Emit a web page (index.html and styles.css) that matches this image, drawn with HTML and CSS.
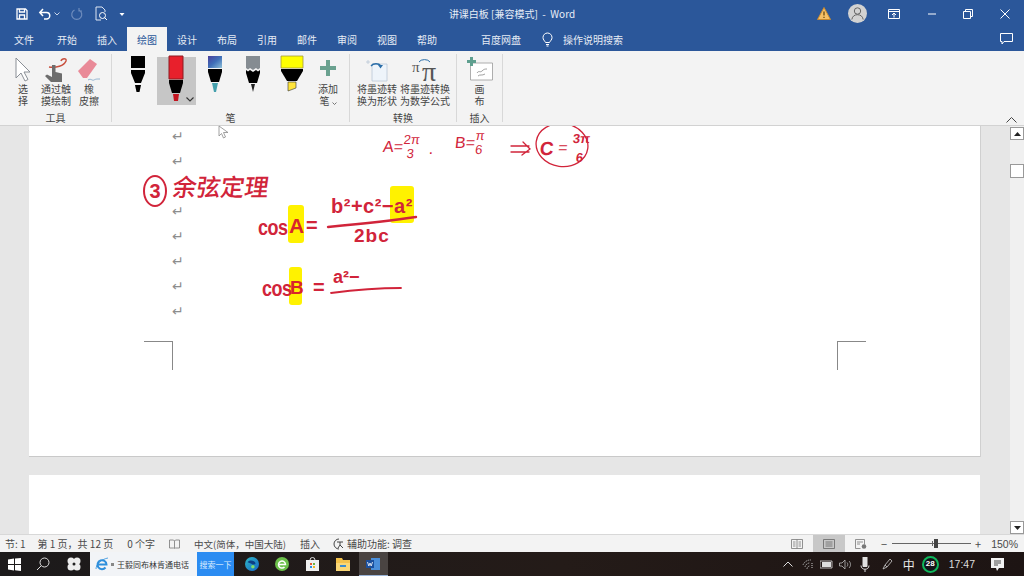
FILE: index.html
```html
<!DOCTYPE html>
<html lang="zh-CN">
<head>
    <meta charset="UTF-8">
    <title>讲课白板 [兼容模式] - Word</title>
    <link rel="stylesheet" href="styles.css">
</head>
<body>
<div class="window">
    <header class="titlebar">
        <div class="quick">
            <svg class="q-save" width="14" height="14" viewBox="0 0 14 14"><path d="M2 2h8.500L12 3.500V12H2zM4.500 2v3h5V2M4.500 12V8h5v4" fill="none" stroke="#fff" stroke-width="1.300"/></svg>
            <svg class="q-undo" width="14" height="14" viewBox="0 0 14 14"><path d="M2 5.500h6.500a3 3 0 0 1 0 6.500H6M5 2L1.800 5.500 5 9" fill="none" stroke="#fff" stroke-width="1.500"/></svg>
            <svg class="q-drop" width="6" height="4" viewBox="0 0 6 4"><path d="M.5.500L3 3 5.500.5" fill="none" stroke="#c9d6ea"/></svg>
            <svg class="q-redo" width="14" height="14" viewBox="0 0 14 14"><path d="M9 3a5 5 0 1 1-4.500 0M9 1v3h3" fill="none" stroke="#6d8bbc" stroke-width="1.200"/></svg>
            <svg class="q-preview" width="14" height="16" viewBox="0 0 14 16"><path d="M2 1h6l3 3v2M2 1v13h5" fill="none" stroke="#dfe7f3"/><circle cx="8.500" cy="9.500" r="3" fill="none" stroke="#fff"/><path d="M10.500 11.500l2.500 2.500" stroke="#fff"/></svg>
            <svg class="q-more" width="6" height="6" viewBox="0 0 6 6"><path d="M.5 2h5L3 5z" fill="#fff"/></svg>
        </div>
        <div class="doc-title">讲课白板 [兼容模式] &nbsp;-&nbsp; Word</div>
        <div class="win-controls">
            <svg class="w-warn" width="14" height="13" viewBox="0 0 14 13"><path d="M7 .5L13.500 12.500H.5z" fill="#f7c067" stroke="#c98a2e"/><path d="M7 4.500v4M7 9.700v1.300" stroke="#6b4a10" stroke-width="1.300"/></svg>
            <svg class="w-user" width="19" height="19" viewBox="0 0 19 19"><circle cx="9.500" cy="9.500" r="9.500" fill="#d2d2d2"/><circle cx="9.500" cy="7" r="3.200" fill="none" stroke="#666"/><path d="M3.800 15.500c.6-3.500 3-4.800 5.700-4.800s5.100 1.300 5.700 4.800" fill="none" stroke="#666"/></svg>
            <svg class="w-display" width="12" height="10" viewBox="0 0 12 10"><path d="M.5.500h11v9H.5zM.5 2.500h11M6 8.500V4M4 6l2-2 2 2" fill="none" stroke="#fff"/></svg>
            <svg class="w-min" width="10" height="2" viewBox="0 0 10 2"><path d="M1 1h8" stroke="#fff"/></svg>
            <svg class="w-max" width="10" height="10" viewBox="0 0 10 10"><path d="M.5 2.500h7v7h-7zM2.500 2.500v-2h7v7h-2" fill="none" stroke="#fff"/></svg>
            <svg class="w-close" width="10" height="10" viewBox="0 0 10 10"><path d="M.5.500l9 9M9.500.500l-9 9" stroke="#fff"/></svg>
        </div>
    </header>

    <nav class="tabs">
        <span class="tab">文件</span>
        <span class="tab tab-start">开始</span>
        <span class="tab">插入</span>
        <span class="tab tab-active">绘图</span>
        <span class="tab">设计</span>
        <span class="tab">布局</span>
        <span class="tab">引用</span>
        <span class="tab">邮件</span>
        <span class="tab">审阅</span>
        <span class="tab">视图</span>
        <span class="tab">帮助</span>
        <span class="tab tab-pan">百度网盘</span>
        <svg class="bulb" width="11" height="15" viewBox="0 0 11 15"><path d="M3.500 10.500C2.500 8.500 1 7.800 1 5.500a4.500 4.500 0 0 1 9 0c0 2.300-1.500 3-2.500 5zM4 12.500h3M4.500 14h2" fill="none" stroke="#fff"/></svg>
        <span class="tell">操作说明搜索</span>
        <svg class="comment" width="13" height="12" viewBox="0 0 13 12"><path d="M.5.500h12v8H4L2 11V8.500H.5z" fill="none" stroke="#fff"/></svg>
    </nav>

    <section class="ribbon">
        <div class="group group-tools">
            <div class="group-body">
                <div class="tool">
                    <svg width="16" height="26" viewBox="0 0 16 26"><path d="M1 1v20l5-5 4 8 3-1.500-4-7.500h6z" fill="#fff" stroke="#8a8f96"/></svg>
                    <span>选<br>择</span>
                </div>
                <div class="tool">
                    <svg width="24" height="26" viewBox="0 0 24 26"><path d="M5 10c7 1 15-1 17-6 1-3-4-3-5 0" fill="none" stroke="#c8503e" stroke-width="1.500"/><path d="M8 8h3.500v7l6.500 1.500V25H7l-6-6 2-1.500L8 20z" fill="#6d6d6d"/></svg>
                    <span>通过触<br>摸绘制</span>
                </div>
                <div class="tool">
                    <svg width="24" height="26" viewBox="0 0 24 26"><path d="M1 14L13 2l7 5-10 14H6z" fill="#e98a98"/><path d="M11 23c3-2 4 1 6 0s2-1 6-1" fill="none" stroke="#7aa3c8" stroke-width=".8"/></svg>
                    <span>橡<br>皮擦</span>
                </div>
            </div>
            <div class="group-label">工具</div>
        </div>

        <div class="group group-pens">
            <div class="group-body">
                <div class="pen">
                    <svg width="18" height="38" viewBox="0 0 18 38"><path d="M2 1h14v12H2z" fill="#000"/><path d="M2 15h14v3l-4 10H6L2 18z" fill="#000"/><path d="M6 30h6l-1.500 7h-3z" fill="#000"/></svg>
                </div>
                <div class="pen pen-active">
                    <svg width="18" height="46" viewBox="0 0 18 46"><path d="M2 1h14v23H2z" fill="#e8202c" stroke="#8d1b20"/><path d="M2 25h14v3l-3 10H5L2 28z" fill="#000"/><path d="M6 39h6l-1 7H7z" fill="#c3141f"/></svg>
                    <svg class="pen-caret" width="8" height="5" viewBox="0 0 8 5"><path d="M.5.500L4 4 7.500.5" fill="none" stroke="#333" stroke-width="1.100"/></svg>
                </div>
                <div class="pen">
                    <svg width="16" height="38" viewBox="0 0 16 38"><defs><linearGradient id="galaxy" x1="0" y1="0" x2="1" y2="1"><stop offset="0" stop-color="#4a3f9c"/><stop offset=".5" stop-color="#3f6fb8"/><stop offset="1" stop-color="#8fc0d8"/></linearGradient></defs><path d="M1 1h14v12H1z" fill="url(#galaxy)"/><path d="M1 14h14v3l-3 10H4L1 17z" fill="#000"/><path d="M5 28h6l-2 9H7z" fill="#45a0ad"/></svg>
                </div>
                <div class="pen">
                    <svg width="16" height="38" viewBox="0 0 16 38"><path d="M1 1h14v12l-2 1.500-2-1.500-3 2-3-2-2 1.500-2-1.500z" fill="#858c92"/><path d="M1 15l2 1.500 2-1.500 3 2 3-2 2 1.500 2-1.500v3l-3 10H4L1 18z" fill="#000"/><path d="M6 29h4l-2 8z" fill="#222"/></svg>
                </div>
                <div class="pen">
                    <svg width="24" height="38" viewBox="0 0 24 38"><path d="M1 1h22v12H1z" fill="#ffff00" stroke="#a39a3a" stroke-width=".8"/><path d="M1 14h22v2l-6 10H7L1 16z" fill="#000"/><path d="M8 27h8v6l-8 3z" fill="#ffe43b" stroke="#333" stroke-width=".6"/></svg>
                </div>
                <div class="tool tool-add">
                    <svg width="16" height="16" viewBox="0 0 16 16"><path d="M6 0h4v6h6v4h-6v6H6v-6H0V6h6z" fill="#6aa18f"/></svg>
                    <span>添加<br>笔 <svg width="5" height="3" viewBox="0 0 5 3"><path d="M.5.500L2.500 2.500 4.500.5" fill="none" stroke="#555" stroke-width=".8"/></svg></span>
                </div>
            </div>
            <div class="group-label">笔</div>
        </div>

        <div class="group group-convert">
            <div class="group-body">
                <div class="tool tool-wide">
                    <svg width="24" height="26" viewBox="0 0 24 26"><path d="M3 3v4M1 5h4M7 7h15v17H7z" fill="#eef4fa" stroke="#b9c7d6" stroke-width=".8"/><path d="M6 9a6 5 0 0 1 10 0" fill="none" stroke="#2b6ea8" stroke-width="1.300"/><path d="M13 8h5l-2.500 3.500z" fill="#2b6ea8"/></svg>
                    <span>将墨迹转<br>换为形状</span>
                </div>
                <div class="tool tool-wide">
                    <svg class="math-icon" width="26" height="26" viewBox="0 0 26 26"><path d="M7 5a6 4 0 0 1 11 0" fill="none" stroke="#2b6ea8"/><text x="0" y="15" class="pi-small">π</text><text x="10" y="24" class="pi-big">π</text></svg>
                    <span>将墨迹转换<br>为数学公式</span>
                </div>
            </div>
            <div class="group-label">转换</div>
        </div>

        <div class="group group-insert">
            <div class="group-body">
                <div class="tool">
                    <svg width="26" height="26" viewBox="0 0 26 26"><path d="M3.500 6h22v17h-22z" fill="#fff" stroke="#9a9a9a" stroke-width=".8"/><path d="M3 0h3v3h3v3H6v3H3V6H0V3h3z" fill="#5f9f8f"/><path d="M10 16c2-3 3 0 5-2s3-2 5-2M11 19c2-2 4 0 7-2" fill="none" stroke="#777" stroke-width=".7"/></svg>
                    <span>画<br>布</span>
                </div>
            </div>
            <div class="group-label">插入</div>
        </div>
        <svg class="collapse" width="11" height="6" viewBox="0 0 11 6"><path d="M.5 5.500l5-5 5 5" fill="none" stroke="#444"/></svg>
    </section>

    <main class="workspace">
        <div class="pages">
            <div class="page page-one">
                <div class="para-marks">
                    <span>↵</span><span>↵</span><span></span><span>↵</span><span>↵</span><span>↵</span><span>↵</span><span>↵</span>
                </div>
                <div class="crop crop-left"></div>
                <div class="crop crop-right"></div>

                <div class="hl hl-a"></div>
                <div class="hl hl-a2"></div>
                <div class="hl hl-b"></div>

                <svg class="ink-lines" width="951" height="330" viewBox="0 0 951 330">
                    <ellipse cx="533" cy="19" rx="26" ry="21.500" transform="rotate(8 533 19)"/>
                    <path d="M299 101C330 98 360 95 387 91" stroke-width="2.400"/>
                    <path d="M302 167C325 164 350 162 372 162" stroke-width="1.800"/>
                    <path d="M482 20h18M482 26h18M494 16l7 7-8 6" stroke-width="1.300"/>
                </svg>

                <span class="ink ink-circled">3</span>
                <span class="ink ink-title">余弦定理</span>
                <span class="ink ink-cos ink-cos-a">cos</span>
                <span class="ink ink-a">A</span>
                <span class="ink ink-eq-a">=</span>
                <span class="ink ink-num">b²+c²−a²</span>
                <span class="ink ink-den">2bc</span>
                <span class="ink ink-cos ink-cos-b">cos</span>
                <span class="ink ink-b">B</span>
                <span class="ink ink-eq-b">=</span>
                <span class="ink ink-num-b">a²−</span>

                <span class="ink ink-small ink-top-a">A=<span class="frac"><span>2π</span><span>3</span></span></span>
                <span class="ink ink-small ink-comma">.</span>
                <span class="ink ink-small ink-top-b">B=<span class="frac"><span>π</span><span>6</span></span></span>
                <span class="ink ink-small ink-top-c"><span class="ink-c">C</span> = <span class="frac frac-big"><span>3π</span><span>6</span></span></span>
            </div>
            <div class="page page-two"></div>
        </div>
        <svg class="cursor" width="11" height="14" viewBox="0 0 11 14"><path d="M1 1v10l2.500-2.500L5.500 13l2-1-2-4.500H10z" fill="#fff" stroke="#8a8a8a" stroke-width=".8"/></svg>
        <aside class="scrollbar">
            <div class="sb-btn"><svg width="7" height="4" viewBox="0 0 7 4"><path d="M0 4L3.500 0 7 4z" fill="#222"/></svg></div>
            <div class="sb-thumb"></div>
            <div class="sb-btn sb-down"><svg width="7" height="4" viewBox="0 0 7 4"><path d="M0 0l3.500 4L7 0z" fill="#222"/></svg></div>
        </aside>
    </main>

    <footer class="statusbar">
        <span class="st-sec">节: 1</span>
        <span class="st-page">第 1 页，共 12 页</span>
        <span class="st-words">0 个字</span>
        <svg class="st-book" width="11" height="10" viewBox="0 0 11 10"><path d="M.5 1h4l1 1 1-1h4v8h-4l-1 .5-1-.5h-4zM5.500 2v7" fill="none" stroke="#777" stroke-width=".8"/></svg>
        <span class="st-lang">中文(简体，中国大陆)</span>
        <span class="st-ins">插入</span>
        <svg class="st-acc" width="12" height="12" viewBox="0 0 12 12"><path d="M6 1a5 5 0 1 0 0 10M4 4h6M7 4v3l3 3M7 7l-2 3" fill="none" stroke="#444"/></svg>
        <span class="st-access">辅助功能: 调查</span>
        <div class="st-right">
            <span class="view"><svg width="12" height="10" viewBox="0 0 12 10"><path d="M.5.500h11v9H.5zM6 .5v9M2 3h2.500M2 5h2.500M2 7h2.500M7.500 3H10M7.500 5H10M7.500 7H10" fill="none" stroke="#777" stroke-width=".8"/></svg></span>
            <span class="view view-active"><svg width="12" height="10" viewBox="0 0 12 10"><path d="M.5.500h11v9H.5zM2.500 3h7M2.500 5h7M2.500 7h7" fill="none" stroke="#666" stroke-width=".8"/></svg></span>
            <span class="view"><svg width="12" height="10" viewBox="0 0 12 10"><path d="M.5.500h9v5M.5.500v9h5M2 3h6M2 5h3" fill="none" stroke="#777" stroke-width=".8"/><circle cx="9" cy="7.500" r="2.300" fill="#777"/></svg></span>
            <span class="zoom-minus">−</span>
            <div class="slider"><i class="tick"></i><i class="thumb"></i></div>
            <span class="zoom-plus">+</span>
            <span class="zoom-val">150%</span>
        </div>
    </footer>

    <footer class="taskbar">
        <svg class="tb-start" width="13" height="13" viewBox="0 0 13 13"><path d="M0 1.500l6-.9V6H0zM7 .5l6-.5v6H7zM0 7h6v5.400l-6-.9zM7 7h6v6l-6-.8z" fill="#fff"/></svg>
        <svg class="tb-search" width="14" height="14" viewBox="0 0 14 14"><circle cx="8.500" cy="5.500" r="4.500" fill="none" stroke="#ddd"/><path d="M5.300 8.700L1 13" stroke="#ddd"/></svg>
        <svg class="tb-wheel" width="14" height="14" viewBox="0 0 14 14"><circle cx="4" cy="4" r="3.500" fill="#eee"/><circle cx="10" cy="4" r="3.500" fill="#eee"/><circle cx="4" cy="10" r="3.500" fill="#eee"/><circle cx="10" cy="10" r="3.500" fill="#eee"/><circle cx="7" cy="7" r="1.500" fill="#222"/></svg>
        <div class="tb-browser">
            <svg width="14" height="14" viewBox="0 0 14 14"><path d="M2.500 7.500h9a4.500 4.500 0 1 0-1 3" fill="none" stroke="#2f8fdc" stroke-width="2"/><path d="M1 12c0-5 6-10 12-11" fill="none" stroke="#2f8fdc" stroke-width=".8"/></svg>
            <i class="tb-dot"></i>
            <span class="tb-query">王毅同布林肯通电话</span>
            <span class="tb-go">搜索一下</span>
        </div>
        <svg class="tb-edge" width="14" height="14" viewBox="0 0 16 16"><defs><linearGradient id="edge" x1="0" y1="0" x2="1" y2="1"><stop offset="0" stop-color="#2fb7c4"/><stop offset="1" stop-color="#1668c8"/></linearGradient></defs><circle cx="8" cy="8" r="8" fill="url(#edge)"/><path d="M3 6c1-3 8-3 9 1 0 2-4 2-4 1" fill="#0c3f86"/><circle cx="9" cy="11" r="2" fill="#7fdc6a"/></svg>
        <svg class="tb-360" width="14" height="14" viewBox="0 0 14 14"><circle cx="7" cy="7" r="7" fill="#6cc04a"/><path d="M3.500 7.500h7a3.500 3.500 0 1 0-1 2.500" fill="none" stroke="#fff" stroke-width="1.500"/></svg>
        <svg class="tb-store" width="13" height="14" viewBox="0 0 13 14"><path d="M0 3h13v11H0z" fill="#f0f0f0"/><path d="M4 3a2.500 2.500 0 0 1 5 0" fill="none" stroke="#ddd"/><path d="M4 6h2v2H4z" fill="#e8572c"/><path d="M7 6h2v2H7z" fill="#6cb33f"/><path d="M4 9h2v2H4z" fill="#2c8fe0"/><path d="M7 9h2v2H7z" fill="#f2b61e"/></svg>
        <svg class="tb-folder" width="14" height="13" viewBox="0 0 14 13"><path d="M0 0h6l1 2h7v11H0z" fill="#f4c24b"/><path d="M0 5h14v8H0z" fill="#fad775"/><path d="M4 7h6v2H4z" fill="#3b8dd0"/></svg>
        <div class="tb-word">
            <svg width="15" height="14" viewBox="0 0 15 14"><path d="M5 1h9v12H5z" fill="#4b8fdb"/><path d="M0 3h8v8H0z" fill="#1a4f9e"/><path d="M1.500 5L2.800 9 4 6l1.200 3L6.500 5" fill="none" stroke="#fff" stroke-width=".8"/></svg>
        </div>
        <div class="tray">
            <svg class="tr-up" width="10" height="6" viewBox="0 0 10 6"><path d="M.5 5.500L5 1l4.500 4.500" fill="none" stroke="#ddd"/></svg>
            <svg class="tr-wifi" width="12" height="11" viewBox="0 0 12 11"><path d="M1 6a8 8 0 0 1 8-5M3 8a5 5 0 0 1 5-4M5 10a3 3 0 0 1 3-3" fill="none" stroke="#aaa" stroke-dasharray="1.500 .7"/><path d="M10 4v6" stroke="#ccc" stroke-dasharray="1 1"/></svg>
            <svg class="tr-batt" width="13" height="9" viewBox="0 0 13 9"><path d="M0 1h12v7H0z" fill="none" stroke="#ddd" stroke-width=".8"/><path d="M2 2h9v5H2z" fill="#ddd"/></svg>
            <svg class="tr-vol" width="13" height="11" viewBox="0 0 13 11"><path d="M.5 4h2.500L6 1v9L3 7H.5zM8 3.500c1 1 1 3 0 4M10 2c2 2 2 5 0 7" fill="none" stroke="#bbb" stroke-width=".8"/></svg>
            <svg class="tr-mic" width="10" height="15" viewBox="0 0 10 15"><path d="M3 0h4v9.500H3z" fill="#e0e0e0" stroke="#e0e0e0" stroke-linejoin="round"/><path d="M1 8.500c0 5 8 5 8 0M5 12.500V15" fill="none" stroke="#ddd"/></svg>
            <svg class="tr-pen" width="11" height="12" viewBox="0 0 11 12"><path d="M1 11l2-4 5-6 2 2-5 6zM3 7l2 2" fill="none" stroke="#ccc" stroke-width=".8"/></svg>
            <span class="tr-ime">中</span>
            <span class="tr-badge">28</span>
            <span class="tr-clock">17:47</span>
            <svg class="tr-note" width="13" height="13" viewBox="0 0 13 13"><path d="M0 0h13v10H8l-2 3-1-3H0z" fill="#f2f2f2"/><path d="M3 3h7M3 5h7M3 7h4" stroke="#222" stroke-width=".8"/></svg>
        </div>
    </footer>
</div>
</body>
</html>
```

FILE: styles.css
```css
* {
    box-sizing: border-box;
}

html, body {
    margin: 0;
    height: 100%;
    overflow: hidden;
}

body {
    font-family: "Noto Sans CJK SC", "Noto Sans", sans-serif;
    font-size: 10px;
    color: #444;
}

.window {
    display: flex;
    flex-direction: column;
    width: 1024px;
    height: 576px;
}

/* title bar */
.titlebar {
    display: grid;
    grid-template-columns: 1fr auto 1fr;
    align-items: center;
    height: 27px;
    background-color: #2b579a;
    color: #e8eef7;
}

.doc-title {
    font-size: 10px;
}

.quick {
    display: flex;
    align-items: center;
    padding-left: 15px;
}

.q-undo { margin-left: 9px; }
.q-drop { margin-left: 2px; }
.q-redo { margin-left: 10px; }
.q-preview { margin-left: 10px; }
.q-more { margin-left: 11px; }

.win-controls {
    display: flex;
    align-items: center;
    justify-content: flex-end;
    padding-right: 14px;
}

.w-user { margin-left: 17px; }
.w-display { margin-left: 21px; }
.w-min { margin-left: 27px; }
.w-max { margin-left: 26px; }
.w-close { margin-left: 27px; }

/* tabs */
.tabs {
    display: flex;
    align-items: center;
    height: 24px;
    padding-left: 4px;
    background-color: #2b579a;
    color: #e6ecf5;
}

.tab {
    display: flex;
    align-items: center;
    justify-content: center;
    flex: none;
    width: 40px;
    height: 100%;
}

.tab-start { margin-left: 3px; }

.tab-active {
    background-color: #f3f3f3;
    color: #2b579a;
}

.tab-pan { margin-left: 34px; }
.bulb { margin-left: 21px; }
.tell { margin-left: 10px; }
.comment { margin-left: auto; margin-right: 11px; }

/* ribbon */
.ribbon {
    position: relative;
    display: flex;
    height: 75px;
    padding-top: 3px;
    background-color: #f3f3f3;
    border-bottom: 1px solid #d2d2d2;
}

.group {
    display: flex;
    flex-direction: column;
    align-items: center;
    flex: none;
    height: 68px;
    border-right: 1px solid #d8d8d8;
}

.group-tools { width: 112px; }
.group-pens { width: 238px; }
.group-convert { width: 107px; }
.group-insert { width: 46px; }

.group-body {
    display: flex;
    flex: 1;
    width: 100%;
    justify-content: center;
}

.group-tools .group-body { justify-content: flex-start; padding-left: 6.500px; }
.group-pens .group-body { justify-content: flex-start; padding-left: 6.500px; }
.group-convert .group-body { justify-content: flex-start; padding-left: 3px; }

.group-label {
    height: 16px;
    line-height: 11px;
    margin-bottom: -6px;
    color: #444;
}

.tool {
    display: flex;
    flex-direction: column;
    align-items: center;
    line-height: 12px;
    padding-top: 3px;
    text-align: center;
}

.tool > svg {
    height: 26px;
    flex: none;
}

.group-tools .tool { width: 33px; }
.tool-wide { width: 48px; white-space: nowrap; }

.pen {
    position: relative;
    display: flex;
    justify-content: center;
    align-items: flex-start;
    flex: none;
    width: 38.500px;
    height: 48px;
    margin-top: 3px;
}

.pen > svg:first-child {
    margin-top: -2px;
}

.pen-active {
    background-color: #c6c6c6;
}

.pen-caret {
    position: absolute;
    right: 2px;
    bottom: 3px;
}

.tool-add {
    width: 34px;
    padding-top: 6px;
}

.tool-add > svg {
    height: 16px;
    margin-bottom: 7px;
}

.math-icon {
    overflow: visible;
}

.pi-small {
    font-family: "Liberation Serif", serif;
    font-size: 15px;
    fill: #555;
}

.pi-big {
    font-family: "Liberation Serif", serif;
    font-size: 28px;
    fill: #555;
}

.collapse {
    position: absolute;
    right: 7px;
    bottom: 2px;
}

/* document */
.workspace {
    position: relative;
    display: flex;
    flex: 1;
    min-height: 0;
    background-color: #e6e6e6;
}

.pages {
    flex: 1;
    min-width: 0;
    overflow: hidden;
    padding-left: 29px;
}

.page {
    position: relative;
    width: 951px;
    background-color: #fff;
}

.page-one {
    height: 331px;
    border-bottom: 1px solid #c9c9c9;
    box-shadow: 1px 0 0 #d0d0d0;
}

.page-two {
    height: 100px;
    margin-top: 18px;
}

.para-marks {
    display: flex;
    flex-direction: column;
    padding: 0 0 0 143px;
}

.para-marks span {
    height: 25px;
    line-height: 21px;
    font-family: "DejaVu Sans", sans-serif;
    font-size: 14px;
    color: #8d8d8d;
}

.crop {
    position: absolute;
    top: 215px;
    width: 29px;
    height: 29px;
    border-top: 1px solid #888;
}

.crop-left {
    left: 115px;
    border-right: 1px solid #888;
}

.crop-right {
    left: 808px;
    border-left: 1px solid #888;
}

/* ink sits freely on the page */
.hl {
    position: absolute;
    background-color: #fff200;
    border-radius: 3px;
}

.hl-a { left: 259px; top: 79px; width: 16px; height: 38px; }
.hl-a2 { left: 361px; top: 60px; width: 24px; height: 37px; }
.hl-b { left: 260px; top: 141px; width: 13px; height: 38px; }

.ink-lines {
    position: absolute;
    left: 0;
    top: 0;
}

.ink-lines ellipse,
.ink-lines path {
    fill: none;
    stroke: #d1243a;
    stroke-linecap: round;
}

.ink-lines ellipse {
    stroke-width: 1.300;
}

.ink {
    position: absolute;
    color: #d1243a;
    font-family: "Liberation Sans", sans-serif;
    font-weight: bold;
    white-space: nowrap;
    line-height: 1;
}

.ink-circled {
    left: 114px;
    top: 49px;
    width: 24px;
    height: 32px;
    border: 2px solid #d1243a;
    border-radius: 50%;
    text-align: center;
    font-size: 20px;
    line-height: 28px;
}

.ink-title {
    left: 144px;
    top: 48px;
    font-family: "Noto Sans CJK SC", sans-serif;
    font-size: 24px;
    font-weight: 500;
    transform: skewX(-8deg);
}

.ink-cos {
    font-size: 18px;
    letter-spacing: -.5px;
    transform: scaleY(1.250);
}

.ink-cos-a { left: 229px; top: 92px; }
.ink-a { left: 260px; top: 89px; font-size: 21px; color: #d8252c; }
.ink-eq-a { left: 277px; top: 89px; font-size: 20px; }
.ink-num { left: 302px; top: 70px; font-size: 20px; letter-spacing: .5px; }
.ink-den { left: 325px; top: 100px; font-size: 19px; letter-spacing: 1px; }
.ink-cos-b { left: 233px; top: 153px; }
.ink-b { left: 261px; top: 152px; font-size: 19px; color: #d8252c; }
.ink-eq-b { left: 284px; top: 151px; font-size: 20px; }
.ink-num-b { left: 304px; top: 142px; font-size: 18px; }

.ink-small {
    display: flex;
    align-items: center;
    font-size: 16px;
    font-weight: normal;
    transform: skewX(-6deg);
}

.frac {
    display: flex;
    flex-direction: column;
    align-items: center;
    font-size: 13px;
    line-height: 14px;
}

.frac-big {
    font-size: 13px;
    line-height: 19px;
    font-weight: bold;
}

.ink-top-a { left: 354px; top: 7px; }
.ink-comma { left: 400px; top: 15px; }
.ink-top-b { left: 426px; top: 3px; }
.ink-top-c { left: 511px; top: 3px; white-space: pre; }
.ink-c { font-size: 19px; font-weight: bold; }

.cursor {
    position: absolute;
    left: 218px;
    top: -1px;
}

/* scrollbar */
.scrollbar {
    position: relative;
    flex: none;
    width: 14px;
    background-color: #f0f0f0;
}

.sb-btn {
    display: flex;
    align-items: center;
    justify-content: center;
    height: 13px;
    margin-top: 1px;
    background-color: #fff;
    border: 1px solid #999;
}

.sb-down {
    position: absolute;
    left: 0;
    right: 0;
    bottom: 0;
}

.sb-thumb {
    height: 14px;
    margin-top: 24px;
    background-color: #fff;
    border: 1px solid #999;
}

/* status bar */
.statusbar {
    display: flex;
    align-items: center;
    flex: none;
    height: 18px;
    background-color: #f3f3f3;
    border-top: 1px solid #d8d8d8;
    color: #4a4a4a;
    white-space: nowrap;
}

.st-sec { margin-left: 5px; }
.st-page { margin-left: 12px; }
.st-words { margin-left: 14px; }
.st-book { margin-left: 14px; }
.st-lang { margin-left: 14px; font-size: 9.500px; }
.st-ins { margin-left: 14px; }
.st-acc { margin-left: 13px; }
.st-access { margin-left: 2px; }

.st-right {
    display: flex;
    align-items: center;
    height: 100%;
    margin-left: auto;
}

.view {
    display: flex;
    align-items: center;
    justify-content: center;
    width: 32px;
    height: 100%;
}

.view-active {
    background-color: #c8c8c8;
}

.zoom-minus { margin-left: 4px; font-size: 11px; }

.slider {
    position: relative;
    width: 79px;
    height: 1px;
    margin-left: 5px;
    background-color: #666;
}

.tick {
    position: absolute;
    left: 40px;
    top: -2px;
    width: 1px;
    height: 5px;
    background-color: #666;
}

.thumb {
    position: absolute;
    left: 42px;
    top: -4px;
    width: 4px;
    height: 9px;
    background-color: #444;
}

.zoom-plus { margin-left: 4px; font-size: 11px; }
.zoom-val { margin-left: 10px; margin-right: 6px; font-size: 10.500px; font-family: "Liberation Sans", sans-serif; }

/* taskbar */
.taskbar {
    display: flex;
    align-items: center;
    flex: none;
    height: 24px;
    background: linear-gradient(90deg, #1c1a1b 0%, #241b18 55%, #1d1413 100%);
    color: #e8e8e8;
    white-space: nowrap;
}

.tb-start { margin-left: 8px; }
.tb-search { margin-left: 15px; }
.tb-wheel { margin-left: 17px; }

.tb-browser {
    display: flex;
    align-items: center;
    width: 144px;
    height: 100%;
    margin-left: 9px;
    padding-left: 5px;
    background-color: #f2f4f7;
    color: #333;
    font-size: 8px;
}

.tb-dot {
    width: 3px;
    height: 3px;
    margin-left: 2px;
    background-color: #888;
}

.tb-query { margin-left: 3px; }

.tb-go {
    display: flex;
    align-items: center;
    justify-content: center;
    width: 37px;
    height: 100%;
    margin-left: auto;
    background-color: #2b8cf2;
    color: #dcecff;
}

.tb-edge { margin-left: 11px; }
.tb-360 { margin-left: 16px; }
.tb-store { margin-left: 17px; }
.tb-folder { margin-left: 17px; }

.tb-word {
    display: flex;
    align-items: center;
    justify-content: center;
    width: 29px;
    height: 100%;
    margin-left: 9px;
    background-color: #4a4442;
    border-bottom: 1px solid #9ab4d8;
}

.tray {
    display: flex;
    align-items: center;
    margin-left: auto;
    height: 100%;
    padding-right: 20px;
}

.tr-wifi { margin-left: 9px; }
.tr-batt { margin-left: 6px; }
.tr-vol { margin-left: 6px; }
.tr-mic { margin-left: 8px; }
.tr-pen { margin-left: 12px; }

.tr-ime {
    margin-left: 10px;
    font-size: 12px;
}

.tr-badge {
    width: 17px;
    height: 17px;
    margin-left: 7px;
    border: 2.500px solid #0fb85c;
    border-radius: 50%;
    background-color: #12151a;
    color: #fff;
    text-align: center;
    font-family: "Liberation Sans", sans-serif;
    font-size: 8px;
    font-weight: bold;
    line-height: 12px;
}

.tr-clock {
    margin-left: 10px;
    font-family: "Liberation Sans", sans-serif;
    font-size: 10.500px;
    color: #ddd;
}

.tr-note { margin-left: 16px; }
```
